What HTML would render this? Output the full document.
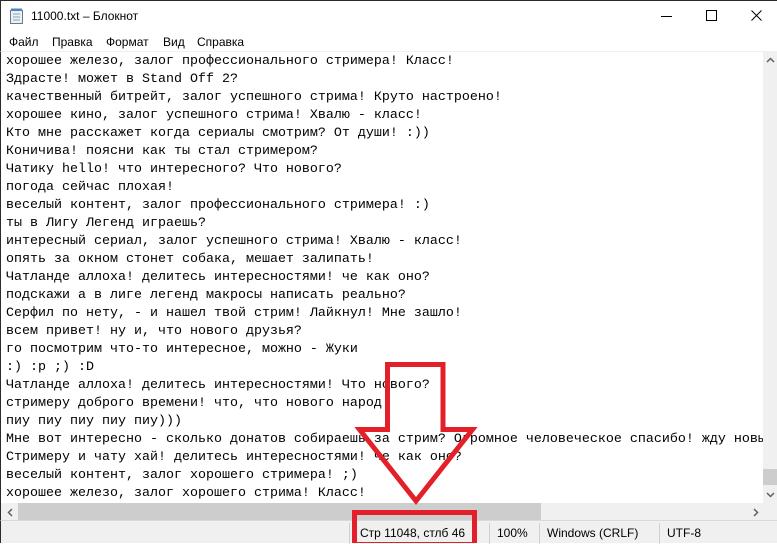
<!DOCTYPE html>
<html><head><meta charset="utf-8"><style>
*{margin:0;padding:0;box-sizing:border-box}
body{width:777px;height:543px;overflow:hidden;background:#fff;position:relative;font-family:"Segoe UI","Liberation Sans","DejaVu Sans",sans-serif}
.abs{position:absolute}
#title{left:0;top:0;width:777px;height:32px;background:#fff;border-top:1px solid #2b2b2b;border-left:1px solid #2b2b2b}
#title span{position:absolute;left:30px;top:8px;font-size:12px;color:#000}
#menu{left:0;top:32px;width:777px;height:19px;font-size:12px;color:#000;border-left:1px solid #2b2b2b}
#menu span{position:absolute;top:3px}
#edit{left:0;top:51px;width:763px;height:452px;border-top:1px solid #f0f0f0;border-left:1px solid #2b2b2b;overflow:hidden}
pre{position:absolute;left:5px;top:1px;font-family:"Liberation Mono","DejaVu Sans Mono",monospace;font-size:13.33px;line-height:18px;color:#000;white-space:pre}
#vs{left:763px;top:51px;width:14px;height:452px;background:#f0f0f0}
#hs{left:0;top:503px;width:763px;height:17px;background:#f0f0f0;border-left:1px solid #2b2b2b}
#corner{left:763px;top:503px;width:14px;height:17px;background:#f0f0f0}
#status{left:0;top:520px;width:777px;height:23px;background:#f0f0f0;border-top:1px solid #d9d9d9;border-left:1px solid #2b2b2b;font-size:12px;color:#000}
#status span{position:absolute;top:5px}
.sep{position:absolute;top:2px;width:1px;height:21px;background:#d0d0d0}
</style></head><body>
<div id="title" class="abs">
<svg class="abs" style="left:8px;top:7px" width="16" height="17"><rect x="1.5" y="2.5" width="12" height="13" fill="#e8f0f8" stroke="#6a7a8c"/><line x1="4" y1="6" x2="11" y2="6" stroke="#8aa"/><line x1="4" y1="9" x2="11" y2="9" stroke="#8aa"/><line x1="4" y1="12" x2="11" y2="12" stroke="#8aa"/><rect x="2" y="0.5" width="11" height="2" fill="#4a86c8"/></svg>
<span>11000.txt – Блокнот</span>
<svg class="abs" style="left:660px;top:9px" width="12" height="12"><line x1="0" y1="6.5" x2="11" y2="6.5" stroke="#000"/></svg>
<svg class="abs" style="left:705px;top:9px" width="12" height="12"><rect x="0.5" y="0.5" width="10" height="10" fill="none" stroke="#000"/></svg>
<svg class="abs" style="left:750px;top:9px" width="12" height="12"><path d="M0.5 0.5L10.5 10.5M10.5 0.5L0.5 10.5" stroke="#000"/></svg>
</div>
<div id="menu" class="abs"><span style="left:8px">Файл</span><span style="left:51px">Правка</span><span style="left:105px">Формат</span><span style="left:162px">Вид</span><span style="left:196px">Справка</span></div>
<div id="edit" class="abs"><pre>хорошее железо, залог профессионального стримера! Класс!
Здрасте! может в Stand Off 2?
качественный битрейт, залог успешного стрима! Круто настроено!
хорошее кино, залог успешного стрима! Хвалю - класс!
Кто мне расскажет когда сериалы смотрим? От души! :))
Коничива! поясни как ты стал стримером?
Чатику hello! что интересного? Что нового?
погода сейчас плохая!
веселый контент, залог профессионального стримера! :)
ты в Лигу Легенд играешь?
интересный сериал, залог успешного стрима! Хвалю - класс!
опять за окном стонет собака, мешает залипать!
Чатланде аллоха! делитесь интересностями! че как оно?
подскажи а в лиге легенд макросы написать реально?
Серфил по нету, - и нашел твой стрим! Лайкнул! Мне зашло!
всем привет! ну и, что нового друзья?
го посмотрим что-то интересное, можно - Жуки
:) :p ;) :D
Чатланде аллоха! делитесь интересностями! Что нового?
стримеру доброго времени! что, что нового народ
пиу пиу пиу пиу пиу)))
Мне вот интересно - сколько донатов собираешь за стрим? Огромное человеческое спасибо! жду новы
Стримеру и чату хай! делитесь интересностями! че как оно?
веселый контент, залог хорошего стримера! ;)
хорошее железо, залог хорошего стрима! Класс!</pre></div>
<div id="vs" class="abs">
<svg class="abs" style="left:3px;top:6px" width="9" height="6"><path d="M1 5L4.5 1.5L8 5" fill="none" stroke="#606060" stroke-width="1.5"/></svg>
<div class="abs" style="left:0;top:418px;width:14px;height:16px;background:#cdcdcd"></div>
<svg class="abs" style="left:3px;top:441px" width="9" height="6"><path d="M1 1L4.5 4.5L8 1" fill="none" stroke="#606060" stroke-width="1.5"/></svg>
</div>
<div id="hs" class="abs">
<svg class="abs" style="left:6px;top:5px" width="6" height="9"><path d="M5 1L1.5 4.5L5 8" fill="none" stroke="#606060" stroke-width="1.5"/></svg>
<div class="abs" style="left:17px;top:0;width:523px;height:17px;background:#cdcdcd"></div>
<svg class="abs" style="left:752px;top:5px" width="6" height="9"><path d="M1 1L4.5 4.5L1 8" fill="none" stroke="#606060" stroke-width="1.5"/></svg>
</div>
<div id="corner" class="abs"></div>
<div id="status" class="abs">
<div class="sep" style="left:348px"></div><div class="sep" style="left:488px"></div><div class="sep" style="left:538px"></div><div class="sep" style="left:658px"></div>
<span style="left:359px">Стр 11048, стлб 46</span><span style="left:496px">100%</span><span style="left:546px">Windows (CRLF)</span><span style="left:666px">UTF-8</span>
</div>
<svg class="abs" style="left:0;top:0" width="777" height="543">
<path d="M387.5 364.5H443V429.5H472.5L416 501L359.5 429.5H387.5Z" fill="none" stroke="#e3202a" stroke-width="5" stroke-linejoin="miter"/>
<rect x="354.5" y="512.5" width="120" height="32" fill="none" stroke="#e3202a" stroke-width="5"/>
</svg>
</body></html>
